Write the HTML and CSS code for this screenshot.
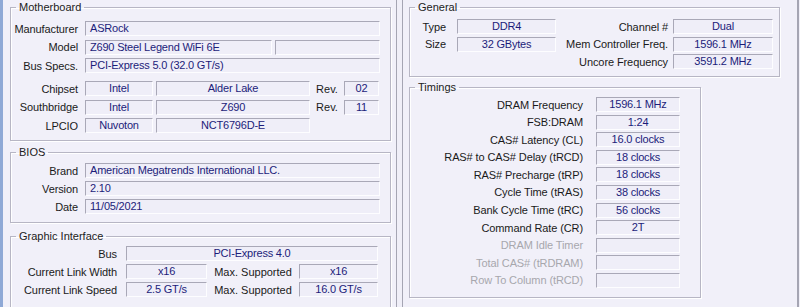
FILE: index.html
```html
<!DOCTYPE html>
<html lang="en">
<head>
  <meta charset="UTF-8">
  <title>CPU-Z Mainboard / Memory</title>
  <link rel="stylesheet" href="styles.css">
</head>
<body>
  <div class="desk">
    <div class="win win-left">
      <fieldset class="grp grp-mb">
        <legend>Motherboard</legend>
        <div class="row"><span class="lbl">Manufacturer</span><span class="fld grow">ASRock</span></div>
        <div class="row"><span class="lbl">Model</span><span class="fld model">Z690 Steel Legend WiFi 6E</span><span class="fld grow"></span></div>
        <div class="row"><span class="lbl">Bus Specs.</span><span class="fld grow">PCI-Express 5.0 (32.0 GT/s)</span></div>
        <div class="row sep"><span class="lbl">Chipset</span><span class="fld c vendor">Intel</span><span class="fld c chip">Alder Lake</span><span class="rev">Rev.</span><span class="fld c revval">02</span></div>
        <div class="row"><span class="lbl">Southbridge</span><span class="fld c vendor">Intel</span><span class="fld c chip">Z690</span><span class="rev">Rev.</span><span class="fld c revval">11</span></div>
        <div class="row"><span class="lbl">LPCIO</span><span class="fld c vendor">Nuvoton</span><span class="fld c chip">NCT6796D-E</span></div>
      </fieldset>

      <fieldset class="grp grp-bios">
        <legend>BIOS</legend>
        <div class="row"><span class="lbl">Brand</span><span class="fld grow">American Megatrends International LLC.</span></div>
        <div class="row"><span class="lbl">Version</span><span class="fld grow">2.10</span></div>
        <div class="row"><span class="lbl">Date</span><span class="fld grow">11/05/2021</span></div>
      </fieldset>

      <fieldset class="grp grp-gi">
        <legend>Graphic Interface</legend>
        <div class="row"><span class="lbl">Bus</span><span class="fld c grow">PCI-Express 4.0</span></div>
        <div class="row"><span class="lbl">Current Link Width</span><span class="fld c link">x16</span><span class="lbl2">Max. Supported</span><span class="fld c grow">x16</span></div>
        <div class="row"><span class="lbl">Current Link Speed</span><span class="fld c link">2.5 GT/s</span><span class="lbl2">Max. Supported</span><span class="fld c grow">16.0 GT/s</span></div>
      </fieldset>
    </div>

    <div class="win win-right">
      <fieldset class="grp grp-gen">
        <legend>General</legend>
        <div class="row"><span class="lbl">Type</span><span class="fld c gval">DDR4</span><span class="lbl r">Channel #</span><span class="fld c rval">Dual</span></div>
        <div class="row"><span class="lbl">Size</span><span class="fld c gval">32 GBytes</span><span class="lbl r">Mem Controller Freq.</span><span class="fld c rval">1596.1 MHz</span></div>
        <div class="row"><span class="lbl r">Uncore Frequency</span><span class="fld c rval">3591.2 MHz</span></div>
      </fieldset>

      <fieldset class="grp grp-tim">
        <legend>Timings</legend>
        <div class="row"><span class="lbl">DRAM Frequency</span><span class="fld c">1596.1 MHz</span></div>
        <div class="row"><span class="lbl">FSB:DRAM</span><span class="fld c">1:24</span></div>
        <div class="row"><span class="lbl">CAS# Latency (CL)</span><span class="fld c">16.0 clocks</span></div>
        <div class="row"><span class="lbl">RAS# to CAS# Delay (tRCD)</span><span class="fld c">18 clocks</span></div>
        <div class="row"><span class="lbl">RAS# Precharge (tRP)</span><span class="fld c">18 clocks</span></div>
        <div class="row"><span class="lbl">Cycle Time (tRAS)</span><span class="fld c">38 clocks</span></div>
        <div class="row"><span class="lbl">Bank Cycle Time (tRC)</span><span class="fld c">56 clocks</span></div>
        <div class="row"><span class="lbl">Command Rate (CR)</span><span class="fld c">2T</span></div>
        <div class="row off"><span class="lbl">DRAM Idle Timer</span><span class="fld c"></span></div>
        <div class="row off"><span class="lbl">Total CAS# (tRDRAM)</span><span class="fld c"></span></div>
        <div class="row off"><span class="lbl">Row To Column (tRCD)</span><span class="fld c"></span></div>
      </fieldset>
    </div>
  </div>
</body>
</html>
```

FILE: styles.css
```css
body {
  margin: 0;
  background: #f0eff8;
  font-family: "Liberation Sans", Arial, sans-serif;
  font-size: 11px;
  color: #1a1a1a;
}
.desk {
  display: flex;
  width: 800px;
  height: 307px;
  overflow: hidden;
}
.win {
  box-sizing: border-box;
  height: 307px;
  background: #f1f0f9;
}
.win-left {
  width: 397px;
  border-left: 3px solid #8fa9d6;
  border-right: 1px solid #a5a5b3;
  padding: 1px 5px 0 7px;
}
.win-right {
  width: 397px;
  margin-left: 5px;
  border-left: 1px solid #a5a5b3;
  border-right: 2px solid #a5a5b3;
  padding: 1px 0 0 6px;
}

/* group boxes */
.grp {
  margin: 0;
  padding: 7px 10px 0 3px;
  border: 1px solid #b7b6c4;
  box-shadow: inset 1px 1px 0 #fff, 1px 1px 0 #fff;
}
.grp legend {
  padding: 0 3px;
  margin-left: 2px;
  line-height: 13px;
  color: #222;
}
.grp-mb { height: 140px; box-sizing: border-box; }
.grp-mb .row { margin-bottom: 3.5px; }
.grp-bios { margin-top: 5px; height: 77px; box-sizing: border-box; padding-top: 4px; }
.grp-gi { margin-top: 7px; height: 80px; box-sizing: border-box; padding-top: 3px; padding-right: 12px; }
.grp-gen { height: 76px; box-sizing: border-box; width: 371px; padding-top: 5px; padding-right: 6px; }
.grp-gen .row { margin-bottom: 2.5px; }
.grp-tim { margin-top: 4px; height: 217px; box-sizing: border-box; width: 292px; padding-top: 3px; padding-right: 20px; }

.row {
  display: flex;
  align-items: center;
  height: 15px;
  margin-bottom: 3px;
  white-space: nowrap;
}
.grp-mb .row.sep { margin-top: 8px; }
.lbl {
  width: 64px;
  flex: none;
  text-align: right;
  margin-right: 7px;
  letter-spacing: -0.1px;
}
.fld {
  box-sizing: border-box;
  height: 15px;
  line-height: 13px;
  padding: 0 4px;
  border-top: 1px solid #a9a8b7;
  border-left: 1px solid #a9a8b7;
  border-bottom: 1px solid #fdfdff;
  border-right: 1px solid #fdfdff;
  background: #efeef8;
  color: #1c1c7a;
  letter-spacing: -0.2px;
  overflow: hidden;
}
.fld.c { text-align: center; }
.grow { flex: 1; }
.model { width: 187px; margin-right: 3px; }
.vendor { width: 68px; margin-right: 3px; }
.chip { width: 154px; }
.rev { width: 34px; text-align: center; }
.revval { width: 35px; }

/* graphic interface */
.grp-gi .lbl { width: 103px; margin-right: 9px; }
.link { width: 81px; }
.lbl2 { width: 92px; text-align: center; }

/* general */
.grp-gen .lbl { width: 33px; margin-right: 11px; }
.grp-gen .lbl.r { width: auto; flex: 1; margin-right: 5px; }
.gval { width: 99px; }
.rval { width: 100px; }

/* timings */
.grp-tim .row { margin-bottom: 2.6px; }
.grp-tim .lbl { width: auto; flex: 1; margin-right: 13px; }
.grp-tim .fld { width: 84px; }
.row.off .lbl { color: #a7a7ad; }
```
